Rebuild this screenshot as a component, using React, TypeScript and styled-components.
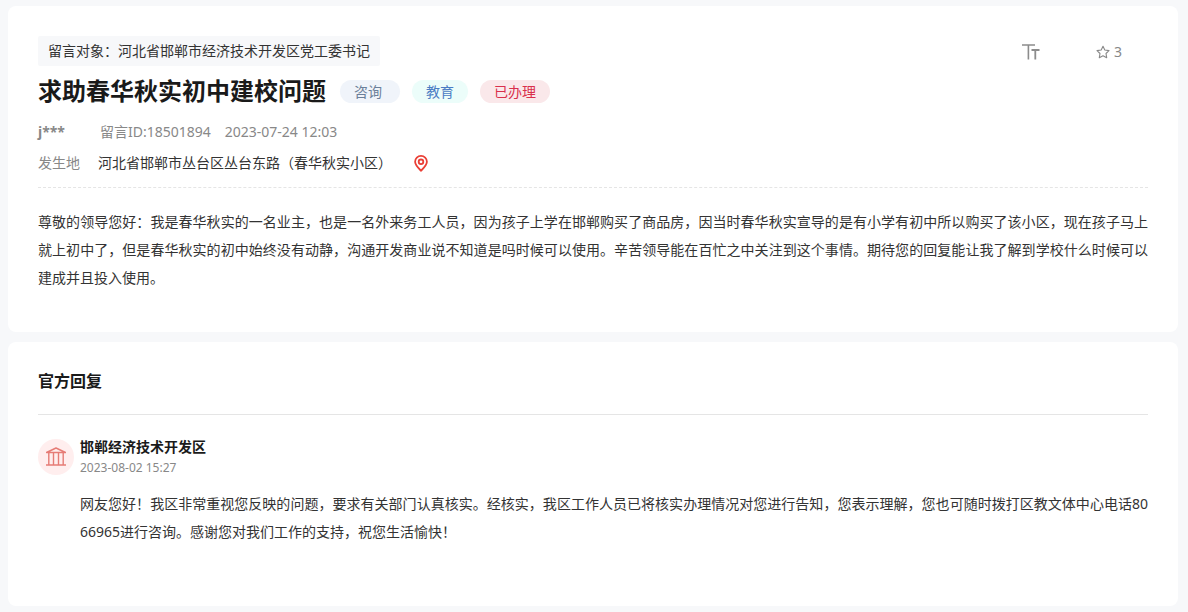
import React from 'react';
import styled, { createGlobalStyle } from 'styled-components';

const GlobalStyle = createGlobalStyle`
  * { box-sizing: border-box; }
  body {
    margin: 0;
    background: #f7f8fa;
    color: #333;
    font: 14px/20px "Noto Sans", "Noto Sans CJK SC", sans-serif;
  }
  h1, h2, h3, p { margin: 0; }
  button { font: inherit; border: 0; padding: 0; background: none; cursor: pointer; }
`;

const Page = styled.main`
  display: flex;
  flex-direction: column;
  gap: 10px;
  padding: 6px 10px 6px 8px;
`;

const Card = styled.section<{ $bottom: number }>`
  padding: 30px 30px ${p => p.$bottom}px;
  border-radius: 8px;
  background: #fff;
`;

const TopBar = styled.div`
  display: flex;
  justify-content: space-between;
  align-items: center;
  height: 30px;
`;

const Target = styled.p`
  padding: 5px 10px;
  border-radius: 2px;
  background: #f7f8fa;
`;

const Actions = styled.div`
  display: flex;
  align-items: center;
  gap: 56px;
  padding: 2px 26px 0 0;
`;

const ActionButton = styled.button`
  display: flex;
  align-items: center;
  gap: 4px;
  color: #888;
`;

const TitleRow = styled.div`
  display: flex;
  align-items: center;
  gap: 12px;
  height: 50px;
`;

const Title = styled.h1`
  margin-right: 2px;
  color: #1a1a1a;
  font-size: 24px;
  line-height: 32px;
  font-weight: 700;
`;

const tones = {
  gray: ['#f0f4fa', '#6b7f99'],
  teal: ['#ecfdfa', '#4a7cc4'],
  red: ['#fae8ea', '#d9304c'],
};

const Tag = styled.span<{ $tone: keyof typeof tones }>`
  height: 23px;
  padding: 0 ${p => (p.$tone === 'gray' ? 18 : 14)}px 0 14px;
  border-radius: 12px;
  line-height: 23px;
  background: ${p => tones[p.$tone][0]};
  color: ${p => tones[p.$tone][1]};
`;

const Meta = styled.div`
  display: flex;
  align-items: center;
  gap: 14px;
  height: 32px;
  color: #888;
`;

const Author = styled.strong`
  width: 48px;
`;

const Place = styled.div`
  display: flex;
  align-items: center;
  height: 29px;
  gap: 18px;
`;

const PlaceLabel = styled.span`
  color: #888;
`;

const PinButton = styled.button`
  display: flex;
  padding: 2px 4px 0;
`;

const Divider = styled.hr<{ $dashed?: boolean }>`
  margin: 10px 0 20px;
  border: 0;
  border-top: 1px ${p => (p.$dashed ? 'dashed' : 'solid')} #e5e5e5;
`;

const Body = styled.p`
  line-height: 28px;
  text-align: justify;
  word-break: break-all;
`;

const SectionTitle = styled.h2`
  color: #1a1a1a;
  font-size: 16px;
  line-height: 18px;
  font-weight: 700;
  padding-bottom: 14px;
`;

const Reply = styled.article`
  display: flex;
  align-items: flex-start;
  gap: 6px;
`;

const Avatar = styled.div`
  display: flex;
  flex: none;
  align-items: center;
  justify-content: center;
  width: 36px;
  height: 36px;
  margin-top: 4px;
  border-radius: 50%;
  background: #ffeeee;
`;

const ReplyContent = styled.div`
  flex: 1;
  min-width: 0;
`;

const ReplyName = styled.h3`
  padding-top: 2px;
  color: #1a1a1a;
  font-size: 14px;
  line-height: 20px;
`;

const ReplyTime = styled.time`
  display: block;
  margin-bottom: 11px;
  color: #888;
  font-size: 12px;
  line-height: 22px;
`;

const TextSizeIcon = () => (
  <svg width="18" height="16" viewBox="0 0 18 16" fill="none" stroke="#8c8c8c" aria-hidden="true">
    <path strokeWidth="1.6" d="M0 1h13M6.400 1v14.500" />
    <path strokeWidth="1.8" d="M9.500 6H17.500M13.300 6v9.500" />
  </svg>
);

const StarIcon = () => (
  <svg width="14" height="14" viewBox="0 0 14 14" fill="none" stroke="#888" strokeWidth="1.100" strokeLinejoin="round" aria-hidden="true">
    <path d="M7 1.200 8.800 5l4.200.600-3 2.900.700 4.200L7 10.700l-3.700 2 .700-4.200-3-2.900L5.200 5Z" />
  </svg>
);

const PinIcon = () => (
  <svg width="14" height="17" viewBox="0 0 14 17" fill="none" stroke="#ea3f35" strokeWidth="1.800" aria-hidden="true">
    <path d="M7 15.700C4.600 13.300 1.100 10.200 1.100 6.800a5.900 5.900 0 0 1 11.800 0C12.900 10.200 9.400 13.300 7 15.700Z" />
    <circle cx="7" cy="6.800" r="2.300" />
  </svg>
);

const HallIcon = () => (
  <svg width="20" height="20" viewBox="0 0 20 20" fill="none" stroke="#e67c76" strokeWidth="1.400" strokeLinejoin="round" aria-hidden="true">
    <path d="M.5 5.500 10 1l9.500 4.500ZM0 18h20M2.800 5.500v12.500M7.500 5.500v12.500M12.500 5.500v12.500M17.200 5.500v12.500" />
  </svg>
);

export default function App() {
  return (
    <>
      <GlobalStyle />
      <Page>
        <Card $bottom={40}>
          <TopBar>
            <Target>留言对象：河北省邯郸市经济技术开发区党工委书记</Target>
            <Actions>
              <ActionButton type="button" aria-label="字号"><TextSizeIcon /></ActionButton>
              <ActionButton type="button"><StarIcon />3</ActionButton>
            </Actions>
          </TopBar>
          <TitleRow>
            <Title>求助春华秋实初中建校问题</Title>
            <Tag $tone="gray">咨询</Tag>
            <Tag $tone="teal">教育</Tag>
            <Tag $tone="red">已办理</Tag>
          </TitleRow>
          <Meta>
            <Author>j***</Author>
            <span>留言ID:18501894</span>
            <time>2023-07-24 12:03</time>
          </Meta>
          <Place>
            <PlaceLabel>发生地</PlaceLabel>
            <span>河北省邯郸市丛台区丛台东路（春华秋实小区）</span>
            <PinButton type="button" aria-label="地图"><PinIcon /></PinButton>
          </Place>
          <Divider $dashed />
          <Body>
            尊敬的领导您好：我是春华秋实的一名业主，也是一名外来务工人员，因为孩子上学在邯郸购买了商品房，因当时春华秋实宣导的是有小学有初中所以购买了该小区，现在孩子马上就上初中了，但是春华秋实的初中始终没有动静，沟通开发商业说不知道是吗时候可以使用。辛苦领导能在百忙之中关注到这个事情。期待您的回复能让我了解到学校什么时候可以建成并且投入使用。
          </Body>
        </Card>
        <Card $bottom={60}>
          <SectionTitle>官方回复</SectionTitle>
          <Divider />
          <Reply>
            <Avatar><HallIcon /></Avatar>
            <ReplyContent>
              <ReplyName>邯郸经济技术开发区</ReplyName>
              <ReplyTime>2023-08-02 15:27</ReplyTime>
              <Body>
                网友您好！我区非常重视您反映的问题，要求有关部门认真核实。经核实，我区工作人员已将核实办理情况对您进行告知，您表示理解，您也可随时拨打区教文体中心电话8066965进行咨询。感谢您对我们工作的支持，祝您生活愉快！
              </Body>
            </ReplyContent>
          </Reply>
        </Card>
      </Page>
    </>
  );
}
